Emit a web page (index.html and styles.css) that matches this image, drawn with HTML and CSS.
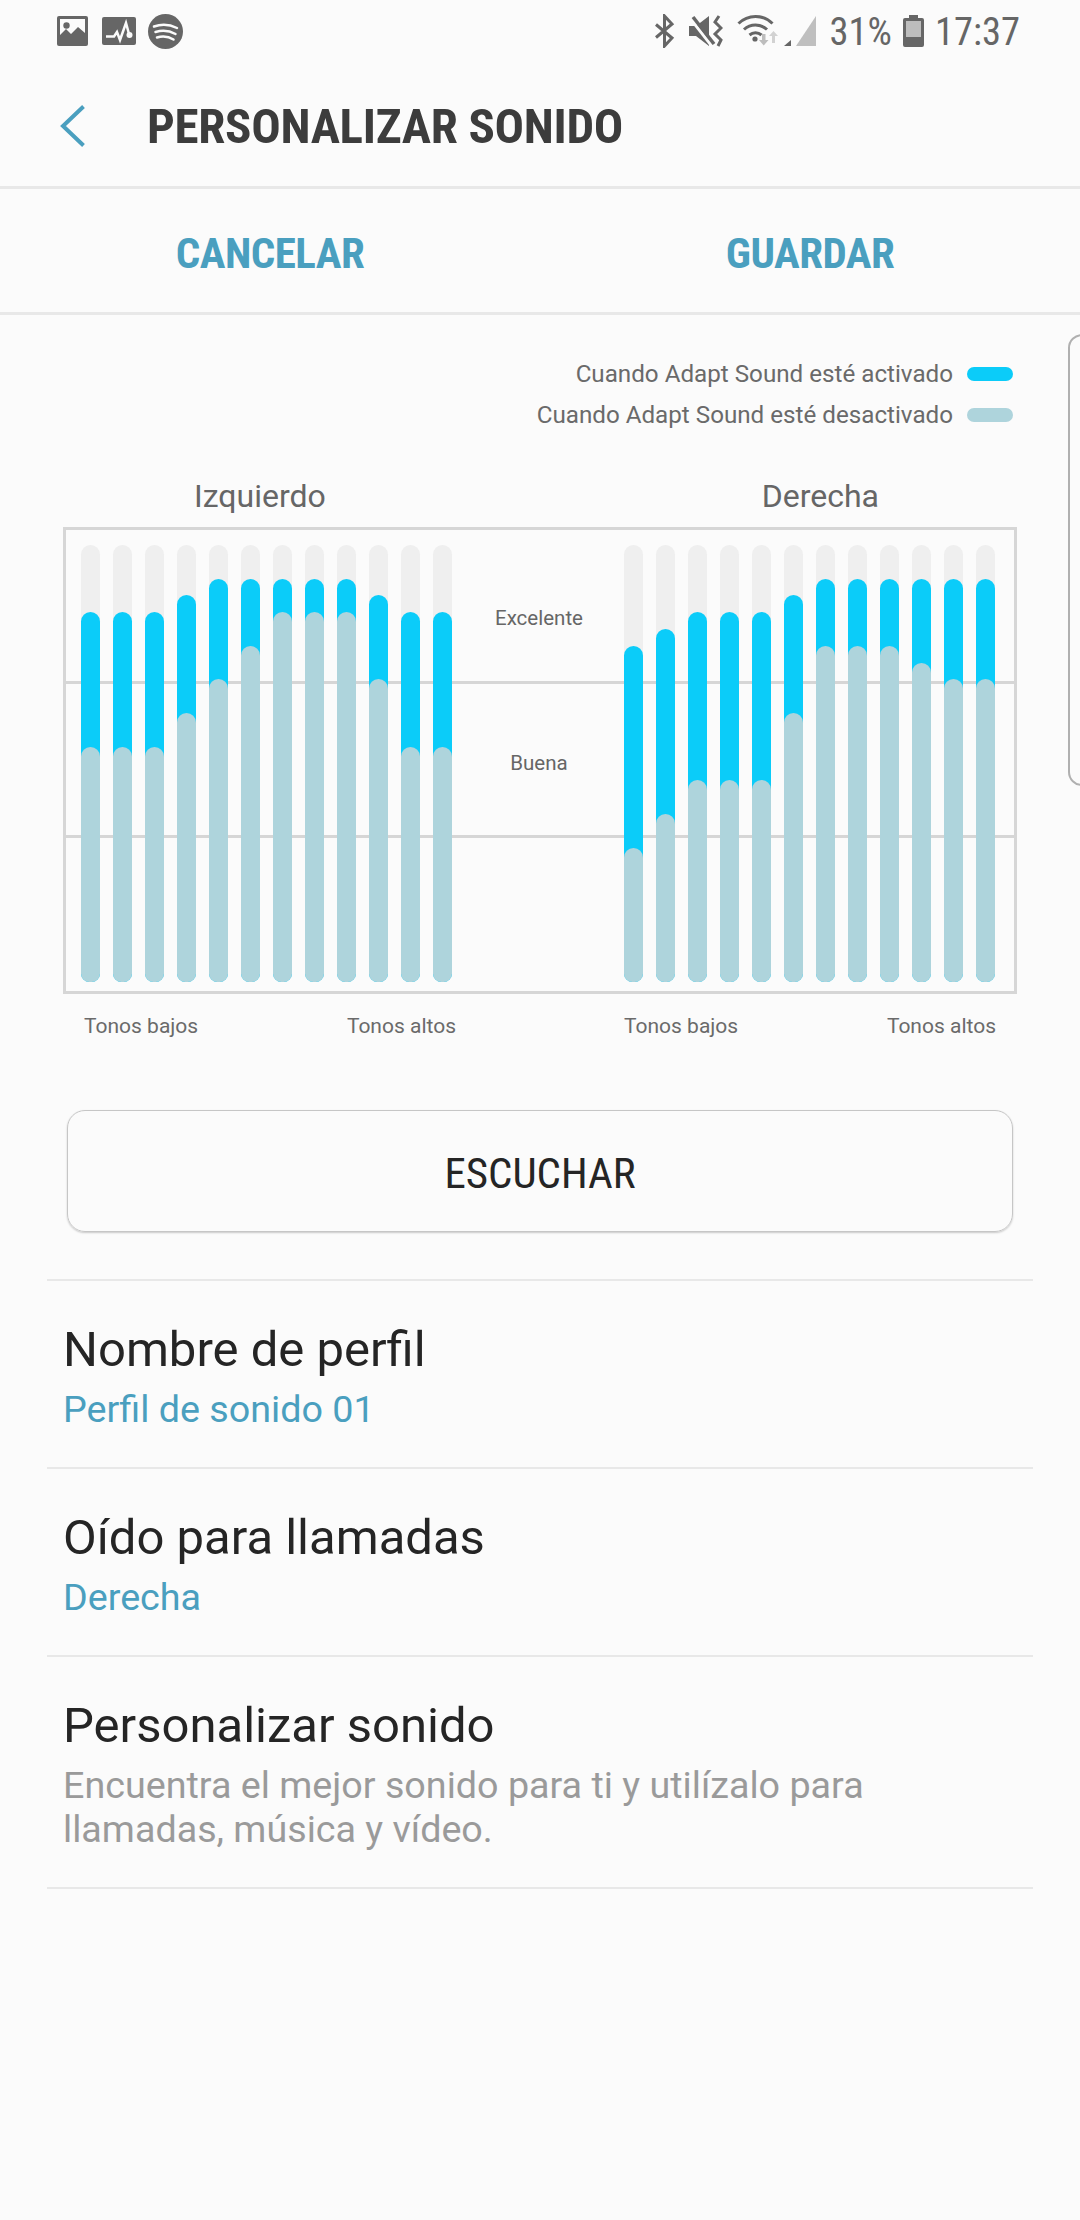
FILE: index.html
```html
<!doctype html>
<html lang="es">

<head>
    <meta charset="utf-8" />
    <meta name="viewport" content="width=device-width, initial-scale=1.0" />
    <title>Personalizar sonido</title>
    <link rel="stylesheet" href="styles.css">
</head>

<body>
    <div class="status-bar">
        <div class="status-group">
            <svg width="31" height="30" viewBox="0 0 31 30">
                <rect width="31" height="30" rx="2" fill="#666" />
                <path d="M3 3H28V17L21 11L14 18L9 13L3 19Z" fill="#fbfbfb" />
                <circle cx="9.500" cy="9.500" r="3.200" fill="#666" />
            </svg>
            <svg class="status-second" width="34" height="28" viewBox="0 0 34 28">
                <rect width="34" height="28" rx="2" fill="#666" />
                <path d="M4 19.500H12L15 15L18 23L24 6L27 17" fill="none" stroke="#fbfbfb" stroke-width="2.500" />
                <circle cx="27.500" cy="18" r="3" fill="#fbfbfb" />
            </svg>
            <svg class="status-third" width="35" height="35" viewBox="0 0 35 35">
                <circle cx="17.500" cy="17.500" r="17.500" fill="#666" />
                <path d="M6 12.500C13 10 22 10.500 29 14M7.500 18C14 16.200 21.500 16.700 27.500 20M9 23.500C14.500 22 20.500 22.500 25.500 25.500"
                    fill="none" stroke="#fbfbfb" stroke-width="2.500" stroke-linecap="round" />
            </svg>
        </div>
        <div class="status-group status-right">
            <svg width="21" height="34" viewBox="0 0 21 34">
                <path d="M2 10.500L18 24L10.500 32V2L18 10L2 23.500" fill="none" stroke="#666" stroke-width="3" />
            </svg>
            <svg width="34" height="32" viewBox="0 0 34 32">
                <path d="M0 11H7L20 1V31L7 21H0Z" fill="#666" />
                <path d="M1 3L22 30" stroke="#fbfbfb" stroke-width="3" />
                <path d="M4 2L25 29" stroke="#666" stroke-width="3.500" />
                <path d="M30 1L26 7L32 13L26 19L32 25L29 31" fill="none" stroke="#666" stroke-width="3" />
            </svg>
            <svg width="79" height="34" viewBox="0 0 79 34">
                <path d="M1.500 9.500C11 0 26 0 35.500 9.500M7 15.500C13.500 9.500 23.500 9.500 30 15.500M12.500 21C16 18 21 18 24.500 21"
                    fill="none" stroke="#666" stroke-width="3" />
                <circle cx="18" cy="25" r="2.600" fill="#666" />
                <path d="M25 20H28.500V26H31.500L26.700 31.500L22 26H25Z" fill="#bdbdbd" />
                <path d="M35 29H38V22H41L36.500 17L32 22H35Z" fill="#d2d2d2" />
                <path d="M47 32H54V26Z" fill="#666" />
                <path d="M59 32H79V2Z" fill="#bfbfbf" />
            </svg>
            <span class="status-txt">31%</span>
            <svg class="status-battery" width="21" height="32" viewBox="0 0 21 32">
                <path d="M6 0H15V3H19Q21 3 21 5V30Q21 32 19 32H2Q0 32 0 30V5Q0 3 2 3H6Z" fill="#666" />
                <rect x="3" y="6" width="15" height="16" fill="#bdbdbd" />
            </svg>
            <span class="status-txt">17:37</span>
        </div>
    </div>

    <div class="app-bar">
        <svg width="25" height="42" viewBox="0 0 25 42">
            <path d="M23.500 1.500L3 21L23.500 40.500" fill="none" stroke="#4a9fbf" stroke-width="4" />
        </svg>
        <div class="app-title">PERSONALIZAR SONIDO</div>
    </div>

    <div class="action-bar">
        <div class="action-btn">CANCELAR</div>
        <div class="action-btn">GUARDAR</div>
    </div>

    <div class="legend">
        <div class="legend-row">Cuando Adapt Sound esté activado <span class="swatch swatch-on"></span></div>
        <div class="legend-row">Cuando Adapt Sound esté desactivado <span class="swatch swatch-off"></span></div>
    </div>

    <div class="ear-names">
        <div class="ear-left">Izquierdo</div>
        <div class="ear-right">Derecha</div>
    </div>

    <div class="chart">
        <div class="bars">
            <div class="bar"><div class="on" style="height:84.62%"></div><div class="off" style="height:53.85%"></div></div>
            <div class="bar"><div class="on" style="height:84.62%"></div><div class="off" style="height:53.85%"></div></div>
            <div class="bar"><div class="on" style="height:84.62%"></div><div class="off" style="height:53.85%"></div></div>
            <div class="bar"><div class="on" style="height:88.46%"></div><div class="off" style="height:61.54%"></div></div>
            <div class="bar"><div class="on" style="height:92.31%"></div><div class="off" style="height:69.23%"></div></div>
            <div class="bar"><div class="on" style="height:92.31%"></div><div class="off" style="height:76.92%"></div></div>
            <div class="bar"><div class="on" style="height:92.31%"></div><div class="off" style="height:84.62%"></div></div>
            <div class="bar"><div class="on" style="height:92.31%"></div><div class="off" style="height:84.62%"></div></div>
            <div class="bar"><div class="on" style="height:92.31%"></div><div class="off" style="height:84.62%"></div></div>
            <div class="bar"><div class="on" style="height:88.46%"></div><div class="off" style="height:69.23%"></div></div>
            <div class="bar"><div class="on" style="height:84.62%"></div><div class="off" style="height:53.85%"></div></div>
            <div class="bar"><div class="on" style="height:84.62%"></div><div class="off" style="height:53.85%"></div></div>
        </div>
        <div class="bands">
            <div class="band-txt">Excelente</div>
            <div class="band-txt band-good">Buena</div>
        </div>
        <div class="bars">
            <div class="bar"><div class="on" style="height:76.92%"></div><div class="off" style="height:30.77%"></div></div>
            <div class="bar"><div class="on" style="height:80.77%"></div><div class="off" style="height:38.46%"></div></div>
            <div class="bar"><div class="on" style="height:84.62%"></div><div class="off" style="height:46.15%"></div></div>
            <div class="bar"><div class="on" style="height:84.62%"></div><div class="off" style="height:46.15%"></div></div>
            <div class="bar"><div class="on" style="height:84.62%"></div><div class="off" style="height:46.15%"></div></div>
            <div class="bar"><div class="on" style="height:88.46%"></div><div class="off" style="height:61.54%"></div></div>
            <div class="bar"><div class="on" style="height:92.31%"></div><div class="off" style="height:76.92%"></div></div>
            <div class="bar"><div class="on" style="height:92.31%"></div><div class="off" style="height:76.92%"></div></div>
            <div class="bar"><div class="on" style="height:92.31%"></div><div class="off" style="height:76.92%"></div></div>
            <div class="bar"><div class="on" style="height:92.31%"></div><div class="off" style="height:73.08%"></div></div>
            <div class="bar"><div class="on" style="height:92.31%"></div><div class="off" style="height:69.23%"></div></div>
            <div class="bar"><div class="on" style="height:92.31%"></div><div class="off" style="height:69.23%"></div></div>
        </div>
    </div>

    <div class="tones">
        <div class="tone-pair"><span>Tonos bajos</span><span>Tonos altos</span></div>
        <div class="tone-pair"><span>Tonos bajos</span><span>Tonos altos</span></div>
    </div>

    <div class="listen-btn">ESCUCHAR</div>

    <div class="settings">
        <div class="row row-value">
            <div class="row-title">Nombre de perfil</div>
            <div class="row-sub">Perfil de sonido 01</div>
        </div>
        <div class="row row-value">
            <div class="row-title">Oído para llamadas</div>
            <div class="row-sub">Derecha</div>
        </div>
        <div class="row row-desc">
            <div class="row-title">Personalizar sonido</div>
            <div class="row-sub row-grey">Encuentra el mejor sonido para ti y utilízalo para<br>llamadas, música y vídeo.</div>
        </div>
    </div>

    <!-- edge of the panel handle -->
    <div class="edge-handle"></div>
</body>

</html>
```

FILE: styles.css
```css
* {
    box-sizing: border-box;
}

body {
    margin: 0;
    height: 2220px;
    overflow: hidden;
    position: relative;
    background: #fbfbfb;
    font-family: "Roboto", sans-serif;
}

/* Status bar */
.status-bar {
    display: flex;
    justify-content: space-between;
    align-items: center;
    height: 62px;
    padding: 0 60px 0 57px;
}

.status-group {
    display: flex;
    align-items: center;
}

.status-second {
    margin-left: 14px;
}

.status-third {
    margin-left: 12px;
}

.status-right {
    gap: 14px;
}

.status-battery {
    margin: 0 -3px;
}

.status-txt {
    padding-top: 2px;
    font-family: "Roboto Condensed", "Roboto", sans-serif;
    font-size: 38.500px;
    line-height: 44px;
    color: #666;
}

/* Header */
.app-bar {
    display: flex;
    align-items: center;
    height: 127px;
    padding: 4px 0 0 60px;
    border-bottom: 3px solid #e8e8e8;
}

.app-title {
    margin-left: 62px;
    font-family: "Roboto Condensed", "Roboto", sans-serif;
    font-size: 49px;
    font-weight: 700;
    letter-spacing: -0.300px;
    color: #3c3c3c;
}

.action-bar {
    display: flex;
    height: 126px;
    padding-top: 5px;
    border-bottom: 3px solid #e8e8e8;
}

.action-btn {
    flex: 1;
    display: flex;
    justify-content: center;
    align-items: center;
    font-family: "Roboto Condensed", "Roboto", sans-serif;
    font-size: 43px;
    font-weight: 700;
    letter-spacing: -0.500px;
    color: #4a9fbf;
}

/* Legend */
.legend {
    padding: 38px 67px 0 0;
}

.legend-row {
    display: flex;
    justify-content: flex-end;
    align-items: center;
    gap: 14px;
    height: 41px;
    font-size: 24.200px;
    color: #6a6a6a;
}

.swatch {
    width: 46px;
    height: 14px;
    border-radius: 7px;
}

.swatch-on {
    background: #0bccf9;
}

.swatch-off {
    background: #aed4dc;
}

/* Chart */
.ear-names {
    display: flex;
    justify-content: space-between;
    margin-top: 41px;
    padding: 0 201px 0 194px;
    font-size: 32px;
    line-height: 41px;
    color: #666;
}

.chart {
    display: flex;
    height: 467px;
    margin: 10px 63px 0;
    padding: 15px 0 0 15px;
    border: 3px solid #d6d6d6;
    background:
        linear-gradient(#d6d6d6, #d6d6d6) 0 151px / 100% 3px no-repeat,
        linear-gradient(#d6d6d6, #d6d6d6) 0 305px / 100% 3px no-repeat;
}

.bars {
    display: flex;
    gap: 13px;
}

.bar {
    display: grid;
    grid-template-rows: 100%;
    align-items: end;
    width: 19px;
    height: 437px;
    border-radius: 10px 10px 9px 9px;
    background: #efefef;
}

.on,
.off {
    grid-area: 1 / 1;
    border-radius: 10px 10px 9px 9px;
}

.on {
    background: #0bccf9;
}

.off {
    background: #aed4dc;
}

.bands {
    width: 172px;
    padding: 61px 0 0 2px;
    text-align: center;
}

.band-txt {
    font-size: 20.500px;
    line-height: 24px;
    color: #666;
}

.band-good {
    margin-top: 121px;
}

.tones {
    display: flex;
    gap: 168px;
    margin-top: 12px;
    padding-left: 84px;
}

.tone-pair {
    display: flex;
    justify-content: space-between;
    width: 372px;
    font-size: 21px;
    line-height: 40px;
    color: #6a6a6a;
}

/* Listen button */
.listen-btn {
    display: flex;
    justify-content: center;
    align-items: center;
    height: 122px;
    margin: 64px 67px 0;
    padding-top: 3px;
    border: 1.500px solid #c6c6c6;
    border-radius: 18px;
    box-shadow: 0 1px 2px rgba(0, 0, 0, 0.2);
    font-family: "Roboto Condensed", "Roboto", sans-serif;
    font-size: 43px;
    color: #252525;
}

/* Settings rows */
.settings {
    margin: 47px 47px 0;
    border-top: 2px solid #e8e8e8;
}

.row {
    padding: 41px 0 0 16px;
    border-bottom: 2px solid #e8e8e8;
}

.row-value {
    height: 188px;
}

.row-desc {
    height: 232px;
}

.row-title {
    font-size: 49px;
    line-height: 56px;
    color: #252525;
}

.row-sub {
    margin-top: 9px;
    font-size: 37.700px;
    line-height: 44px;
    color: #4a9fbf;
}

.row-grey {
    color: #9a9a9a;
}

.edge-handle {
    position: absolute;
    top: 334px;
    right: -20px;
    width: 32px;
    height: 452px;
    border: 2px solid #b0b0b0;
    border-radius: 14px;
}
```
